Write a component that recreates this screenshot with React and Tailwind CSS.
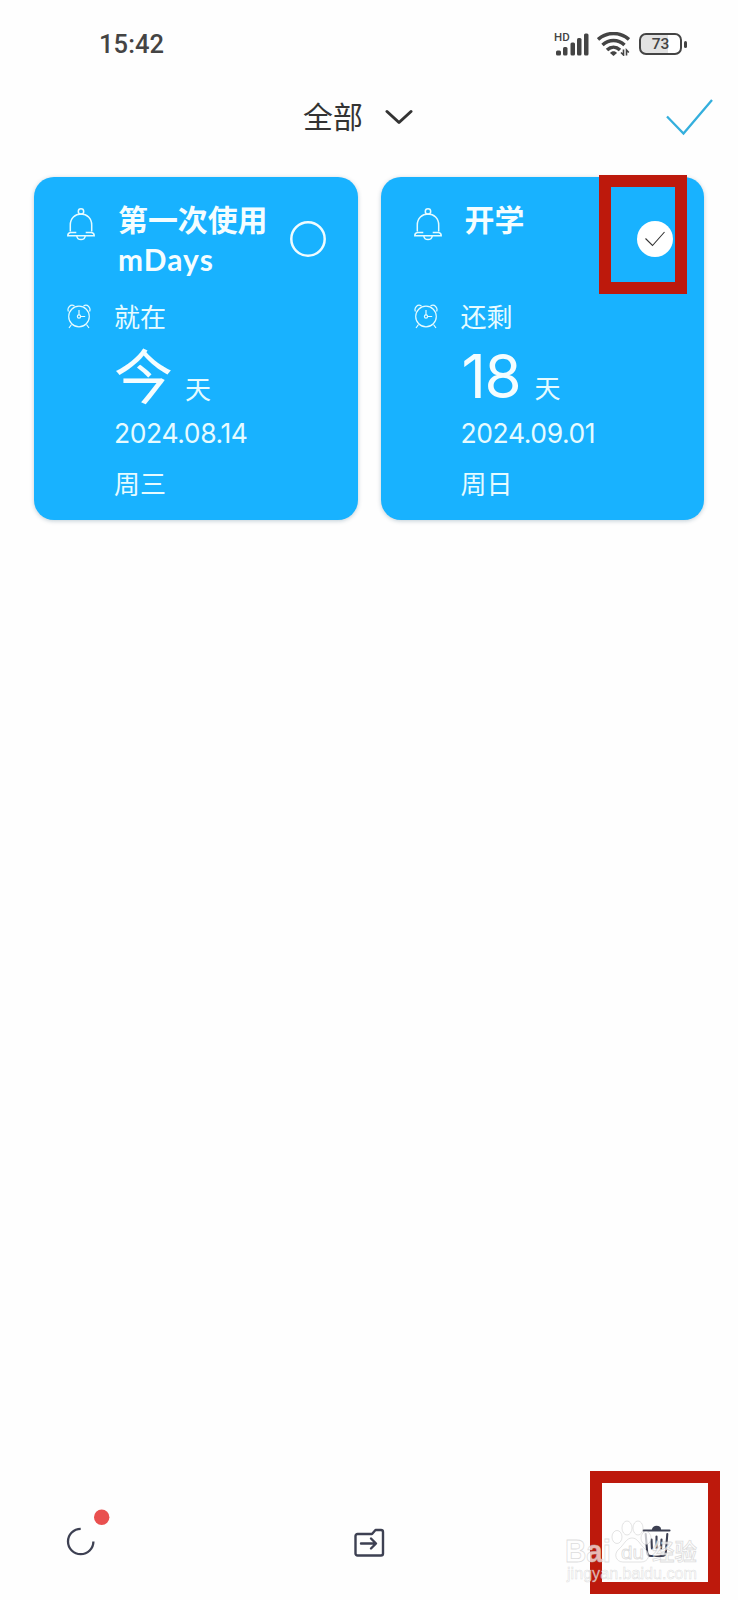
const EVENTS = [
  {
    title: ['第一次使用', 'mDays'],
    status: '就在',
    count: '今',
    date: '2024.08.14',
    weekday: '周三',
    selected: false,
  },
  {
    title: ['开学'],
    status: '还剩',
    count: '18',
    date: '2024.09.01',
    weekday: '周日',
    selected: true,
  },
]

function BellIcon() {
  return (
    <svg width="28" height="33" viewBox="0 0 28 33" fill="none" stroke="currentColor" strokeWidth="1.5">
      <circle cx="14" cy="3.5" r="2.7" />
      <path d="M3.3 23.5V17C3.3 10.3 8 6 14 6s10.700 4.300 10.700 11v6.500" />
      <path d="M9.300 24.500H3.500C1.800 24.700.8 25.800.8 27.700h26.400c0-1.900-1-3-2.700-3.200H18.700" />
      <path d="M9.800 28c.3 2.400 2 3.600 4.200 3.600s3.900-1.200 4.200-3.600" />
    </svg>
  )
}

function ClockIcon() {
  return (
    <svg width="24" height="25" viewBox="0 0 24 25" fill="none" stroke="currentColor" strokeWidth="1.2">
      <circle cx="12" cy="12.500" r="10.300" />
      <circle cx="12" cy="12.500" r="1.600" />
      <path d="M12 6v4.900M13.600 12.500h4.600M4.500 20.500L2 24M19.500 20.500L22 24" />
      <path d="M1.400 7.500C-.2 3.800 3.600-.4 7.500 2M22.600 7.500C24.200 3.800 20.400-.4 16.500 2" />
    </svg>
  )
}

function SelectCircle({ selected }) {
  if (!selected) {
    return (
      <svg className="shrink-0" width="36" height="36" viewBox="0 0 36 36" fill="none">
        <circle cx="18" cy="18" r="16.700" stroke="#effcff" strokeWidth="2.500" />
      </svg>
    )
  }
  return (
    <span className="flex size-9 shrink-0 items-center justify-center rounded-full bg-white">
      <svg width="20" height="16" viewBox="0 0 20 16" fill="none" stroke="#333" strokeWidth="1.100">
        <path d="M.5 7.500l7 7L19.500 1" />
      </svg>
    </span>
  )
}

function EventCard({ event }) {
  return (
    <div className="h-[343px] rounded-[20px] bg-[#18b2ff] pt-6 pl-[33px] text-[#e6fbff] shadow-[0_1px_4px_rgba(0,60,90,0.25)]">
      <div className="flex h-[76px]">
        <div className="w-[51px] pt-[7px]">
          <BellIcon />
        </div>
        <div className="w-[172px] font-[Lato,'Noto_Sans_CJK_SC',sans-serif] text-[29.900px] leading-[39px] font-bold whitespace-nowrap text-[#f4fdff]">
          <div className="-mt-px">{event.title[0]}</div>
          {event.title[1] && <div className="mt-px tracking-[1.100px]">{event.title[1]}</div>}
        </div>
        <div className="flex items-center">
          <SelectCircle selected={event.selected} />
        </div>
      </div>
      <div className="mt-[21px] flex h-[38px]">
        <div className="w-[47px] pt-[6px]">
          <ClockIcon />
        </div>
        <div className="text-[26px] leading-[39px]">{event.status}</div>
      </div>
      <div className="pl-[47px]">
        <div className="flex h-[72px] items-baseline pt-[4px] leading-[72px]">
          <span
            className={
              event.count === '今'
                ? 'w-[71px] text-[59px] text-[#f4fdff]'
                : 'w-[74px] pl-px font-[Inter,sans-serif] text-[60px] tracking-[-1.500px] text-[#f4fdff]'
            }
          >
            {event.count}
          </span>
          <span className="text-[26px]">天</span>
        </div>
        <div className="mt-[6px] h-[38px] font-[Inter,sans-serif] text-[26.500px] leading-[38px] tracking-[-0.400px]">
          {event.date}
        </div>
        <div className="mt-[13px] h-[38px] text-[26px] leading-[38px]">{event.weekday}</div>
      </div>
    </div>
  )
}

function StatusBar() {
  return (
    <div className="flex h-[88px] items-center justify-between pr-[51px] pl-[99px] text-[#444]">
      <span className="font-[Roboto,sans-serif] text-[25.500px] font-medium tracking-[0.100px]">15:42</span>
      <div className="flex items-center">
        <div className="grid">
          <span className="z-10 col-start-1 row-start-1 -mt-[2px] h-[14px] font-[Roboto,sans-serif] text-[11.500px] leading-[14px] font-medium">
            HD
          </span>
          <svg className="col-start-1 row-start-1" width="36" height="24" viewBox="0 0 36 24" fill="#444">
            <rect x="2" y="18.500" width="5" height="5" rx="1.500" />
            <rect x="9" y="15" width="4.500" height="8.500" rx="1.500" />
            <rect x="16.500" y="10.500" width="4.500" height="13" rx="1.500" />
            <rect x="23" y="6" width="4.500" height="17.500" rx="1.500" />
            <rect x="30" y="1.500" width="4.500" height="22" rx="1.500" />
          </svg>
        </div>
        <svg className="ml-[7px]" width="33" height="24" viewBox="0 0 33 24" fill="none" stroke="#444" strokeWidth="3.500">
          <path d="M1 7.500C10-.5 23-.5 32 7.500M5.500 13c6.500-6 15.500-6 22 0M10 18c4-3.800 9-3.800 13 0" />
          <path d="M13 21c1.700-2.200 5.300-2.200 7 0l-3.500 3z" fill="#444" stroke="none" />
          <path d="M26.500 17.500v5.500l-2.500-2.500M29.500 23.500V18l2.300 2.500" strokeWidth="1.600" />
        </svg>
        <div className="ml-[9px] flex h-[22px] w-[43px] items-center justify-center rounded-[7px] border-2 border-[#444] bg-linear-to-r from-[#e2e2e2] from-70% to-white to-70% pt-[2px] font-[Roboto,sans-serif] text-[15.500px] leading-none font-medium">
          73
        </div>
        <div className="ml-[2px] h-[7px] w-[3px] rounded-full bg-[#444]" />
      </div>
    </div>
  )
}

function Header() {
  return (
    <div className="flex h-[89px] items-start justify-between pl-[303px]">
      <div className="flex h-[58px] items-center gap-[22px] text-[29.900px] text-[#333]">
        <span>全部</span>
        <svg width="28" height="16" viewBox="0 0 28 16" fill="none" stroke="currentColor" strokeWidth="3" strokeLinecap="round" strokeLinejoin="round">
          <path d="M2 2.500l12 11 12-11" />
        </svg>
      </div>
      <svg className="mt-[11px] mr-[25px]" width="47" height="37" viewBox="0 0 47 37" fill="none" stroke="#34afdd" strokeWidth="2.300">
        <path d="M1 17.500l16.500 17L46 1" />
      </svg>
    </div>
  )
}

function Toolbar() {
  return (
    <div className="flex h-[100px] text-[#3d4052]">
      <svg className="mt-[8px] ml-[66px]" width="44" height="49" viewBox="0 0 44 49" fill="none">
        <path d="M14.700 20.800A12.700 12.700 0 1 0 27.400 33.500" stroke="currentColor" strokeWidth="2.300" />
        <circle cx="35.700" cy="9.300" r="7.700" fill="#e9504f" />
      </svg>
      <svg className="mt-[28px] ml-[244px]" width="31" height="29" viewBox="0 0 31 29" fill="none" stroke="currentColor" strokeWidth="2.400" strokeLinecap="round" strokeLinejoin="round">
        <path d="M3.500 6H18l3.500-4h5.500a2 2 0 0 1 2 2v21.500a2 2 0 0 1-2 2H3.500a2 2 0 0 1-2-2V8a2 2 0 0 1 2-2z" />
        <path d="M7 15.500h14.500M17 10.500l5 5-5 5" />
      </svg>
      <svg className="mt-[25px] ml-[257px]" width="29" height="33" viewBox="0 0 29 33" fill="none" stroke="currentColor" strokeWidth="2.100" strokeLinecap="round">
        <path d="M1.500 5.500h26" />
        <path d="M11 4.500c0-3.500 7-3.500 7 0z" fill="currentColor" />
        <path d="M3.700 9l1.500 18.500c.2 2.400 1.400 3.500 3.800 3.500h11c2.400 0 3.600-1.100 3.800-3.500L25.300 9" />
        <path d="M9.500 14.500l.4 9M14.500 11.500v12M19.500 14.500l-.4 9" />
      </svg>
    </div>
  )
}

function Watermark() {
  return (
    <div className="absolute top-[1519px] left-[565px]">
      <svg width="134" height="66" viewBox="0 0 134 66" fill="#fff" fillOpacity="0.7" stroke="#bbb" strokeOpacity="0.5" strokeWidth="0.800" fontFamily="'Liberation Sans', 'Noto Sans CJK SC', sans-serif">
        <ellipse cx="52" cy="18" rx="5" ry="6.500" />
        <ellipse cx="62" cy="9" rx="5" ry="7" />
        <ellipse cx="73" cy="9" rx="5" ry="7" />
        <ellipse cx="81" cy="19" rx="5" ry="6.500" />
        <path d="M67 19c-6 0-8 7-13 11-6 5-3 13 4 13h18c8 0 10-8 4-13-5-4-7-11-13-11z" />
        <text x="0" y="43" fontSize="31" fontWeight="700" textLength="46" lengthAdjust="spacingAndGlyphs">Bai</text>
        <text x="56" y="40" fontSize="19" textLength="23" lengthAdjust="spacingAndGlyphs">du</text>
        <text x="87" y="41" fontSize="23" fontWeight="500" textLength="45" lengthAdjust="spacingAndGlyphs">经验</text>
        <text x="2" y="60" fontSize="16" strokeWidth="0.500" textLength="130" lengthAdjust="spacingAndGlyphs">jingyan.baidu.com</text>
      </svg>
    </div>
  )
}

export default function App() {
  return (
    <div className="relative flex h-[1600px] w-[738px] flex-col overflow-hidden bg-[#fefefe] font-['Open_Sans','Noto_Sans_CJK_SC',sans-serif]">
      <StatusBar />
      <Header />
      <main className="grid flex-1 grid-cols-2 content-start gap-[23px] px-[34px]">
        {EVENTS.map((event) => (
          <EventCard key={event.date} event={event} />
        ))}
      </main>
      <Toolbar />
      {/* red callouts around the checked card and the delete button */}
      <div className="absolute top-[175px] left-[599px] h-[119px] w-[88px] border-[12px] border-[#bd190c]" />
      <div className="absolute top-[1471px] left-[590px] h-[123px] w-[130px] border-[12px] border-[#bd190c]" />
      <Watermark />
    </div>
  )
}
